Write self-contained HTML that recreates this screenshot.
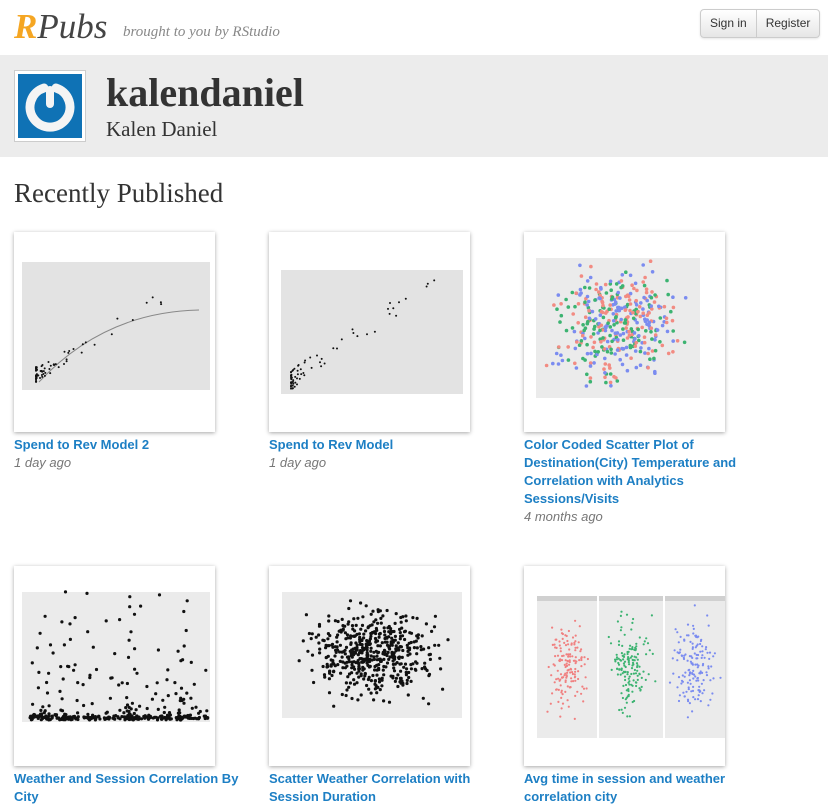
<!DOCTYPE html>
<html><head><meta charset="utf-8"><style>
body{margin:0;width:828px;height:806px;overflow:hidden;background:#fff;font-family:"Liberation Sans",sans-serif;position:relative}
.logo{position:absolute;left:14px;top:7px;font-family:"Liberation Serif",serif;font-style:italic;font-size:35px;color:#444}
.logo b{color:#f5a623;font-weight:bold}
.tag{position:absolute;left:123px;top:24px;font-family:"Liberation Serif",serif;font-style:italic;font-size:15px;color:#888}
.btns{position:absolute;left:700px;top:9px;height:27px;border:1px solid #ccc;border-radius:4px;background:linear-gradient(#fff,#e6e6e6);display:flex;font-size:12px;color:#333;box-shadow:0 1px 2px rgba(0,0,0,.1)}
.btns div{padding:6px 9px 0}
.btns div+div{border-left:1px solid #ccc}
.band{position:absolute;left:0;top:55px;width:828px;height:102px;background:#ececec}
.av{position:absolute;left:14px;top:70px;width:70px;height:70px;border:1px solid #ccc;background:#fff}
.av div{position:absolute;left:3px;top:3px;width:64px;height:64px;background:#0f72b5}
.name{position:absolute;left:106px;top:69px;font-family:"Liberation Serif",serif;font-weight:bold;font-size:40px;color:#333}
.full{position:absolute;left:106px;top:117px;font-family:"Liberation Serif",serif;font-size:21px;color:#333}
h2{position:absolute;left:14px;top:178px;margin:0;font-family:"Liberation Serif",serif;font-weight:normal;font-size:27px;color:#333}
.card{position:absolute;width:201px;height:200px;background:#fff;box-shadow:0 1px 4px rgba(0,0,0,.35)}
.card svg{position:absolute;left:0;top:0}
.t{position:absolute;width:240px;font-weight:bold;font-size:13px;line-height:18px;color:#1d7fc4}
.d{position:absolute;font-style:italic;font-size:13px;color:#777}
</style></head><body>
<div class="logo"><b>R</b>Pubs</div>
<div class="tag">brought to you by RStudio</div>
<div class="btns"><div>Sign in</div><div>Register</div></div>
<div class="band"></div>
<div class="av"><div><svg width="64" height="64"><path d="M38 14 A20 20 0 1 1 26 14" fill="none" stroke="#f4f4f4" stroke-width="9" stroke-linecap="round"/><rect x="28" y="12" width="8" height="22" rx="4" fill="#f4f4f4"/></svg></div></div>
<div class="name">kalendaniel</div>
<div class="full">Kalen Daniel</div>
<h2>Recently Published</h2>

<div class="card" style="left:14px;top:232px"><svg id="c1" width="201" height="200"><rect x="8" y="30" width="188" height="128" fill="#e3e3e3"/><path d="M25 150 Q90 80 185 78" stroke="#888" fill="none"/></svg></div>
<div class="card" style="left:269px;top:232px"><svg id="c2" width="201" height="200"><rect x="12" y="38" width="182" height="124" fill="#e3e3e3"/></svg></div>
<div class="card" style="left:524px;top:232px"><svg id="c3" width="201" height="200"><rect x="12" y="26" width="164" height="140" fill="#ebebeb"/></svg></div>
<div class="card" style="left:14px;top:566px"><svg id="c4" width="201" height="200"><rect x="8" y="26" width="188" height="130" fill="#ebebeb"/></svg></div>
<div class="card" style="left:269px;top:566px"><svg id="c5" width="201" height="200"><rect x="13" y="26" width="180" height="126" fill="#ebebeb"/></svg></div>
<div class="card" style="left:524px;top:566px"><svg id="c6" width="201" height="200"><rect x="13" y="34" width="60" height="138" fill="#ebebeb"/><rect x="75" y="34" width="64" height="138" fill="#ebebeb"/><rect x="141" y="34" width="60" height="138" fill="#ebebeb"/><rect x="13" y="30" width="60" height="5" fill="#d0d0d0"/><rect x="75" y="30" width="64" height="5" fill="#d0d0d0"/><rect x="141" y="30" width="60" height="5" fill="#d0d0d0"/></svg></div>

<div class="t" style="left:14px;top:436px">Spend to Rev Model 2</div>
<div class="d" style="left:14px;top:455px">1 day ago</div>
<div class="t" style="left:269px;top:436px">Spend to Rev Model</div>
<div class="d" style="left:269px;top:455px">1 day ago</div>
<div class="t" style="left:524px;top:436px;width:230px">Color Coded Scatter Plot of Destination(City) Temperature and Correlation with Analytics Sessions/Visits</div>
<div class="d" style="left:524px;top:509px">4 months ago</div>
<div class="t" style="left:14px;top:770px">Weather and Session Correlation By City</div>
<div class="t" style="left:269px;top:770px;width:215px">Scatter Weather Correlation with Session Duration</div>
<div class="t" style="left:524px;top:770px;width:215px">Avg time in session and weather correlation city</div>
<script>
var s=7;function r(){s=(s*9301+49297)%233280;return s/233280}
function dots(id,n,f,col,rad){var g=document.getElementById(id),h='';for(var i=0;i<n;i++){var p=f();var c=col?col[Math.floor(r()*col.length)]:'#111';h+='<circle cx="'+p[0].toFixed(1)+'" cy="'+p[1].toFixed(1)+'" r="'+rad+'" fill="'+c+'"/>';}g.innerHTML+=h;}
function g(){return (r()+r()+r()-1.5)/1.5}
dots('c1',70,function(){var a=Math.pow(r(),4);return[22+a*150,150-a*90-r()*15]},null,1);
dots('c2',70,function(){var a=Math.pow(r(),4);return[22+a*160,158-a*110-r()*20]},null,1);
dots('c3',400,function(){return[94+g()*85,95+g()*75]},['#f28b82','#3cb371','#7b8cf0'],1.8);
dots('c4',350,function(){var a=Math.pow(r(),9);return[16+r()*178,154-a*130-r()*4]},null,1.6);
dots('c5',500,function(){return[103+g()*85,88+g()*60]},null,1.6);
dots('c6',150,function(){return[43+g()*28,100+g()*60]},['#f08080'],1.1);
dots('c6',150,function(){return[107+g()*30,100+g()*65]},['#3cb371'],1.1);
dots('c6',150,function(){return[171+g()*28,100+g()*65]},['#7b8cf0'],1.1);
</script>
</body></html>
